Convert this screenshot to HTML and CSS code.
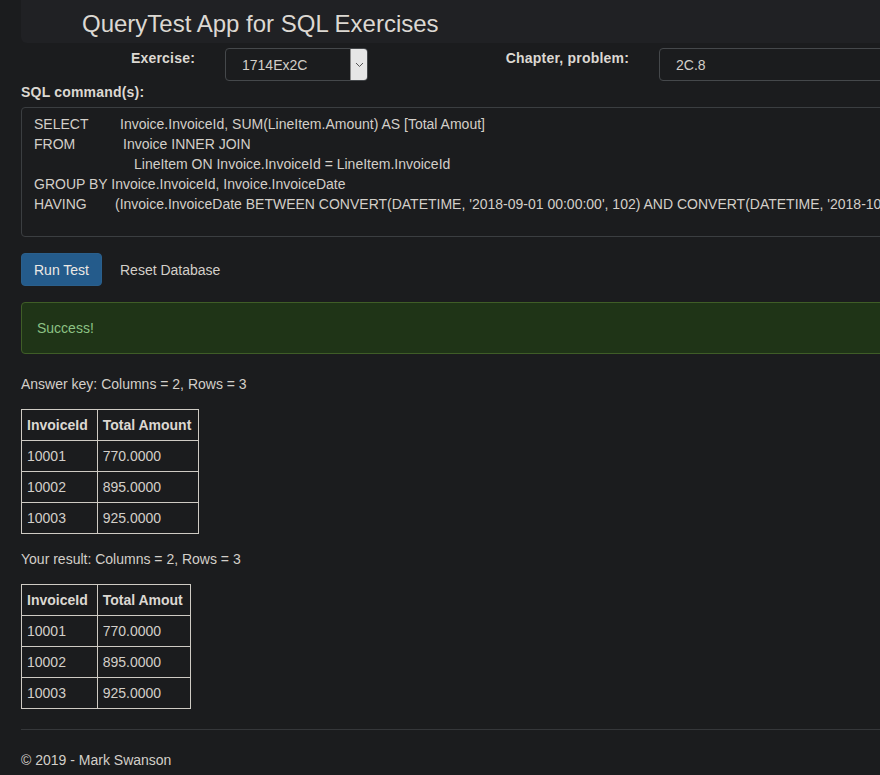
FILE: index.html
```html
<!DOCTYPE html>
<html lang="en">
<head>
<meta charset="utf-8">
<title>QueryTest App for SQL Exercises</title>
<link rel="stylesheet" href="styles.css">
</head>
<body>
<div class="page">
  <div class="jumbotron">
    <h1>QueryTest App for SQL Exercises</h1>
  </div>

  <div class="form-row">
    <label class="lbl lbl-exercise">Exercise:</label>
    <div class="select">
      <span class="select-value">1714Ex2C</span>
      <span class="select-arrow">
        <svg width="9" height="6" viewBox="0 0 9 6"><path d="M1 1 L4.5 4.5 L8 1" fill="none" stroke="#555" stroke-width="1"/></svg>
      </span>
    </div>
    <label class="lbl lbl-chapter">Chapter, problem:</label>
    <div class="input">2C.8</div>
  </div>

  <label class="lbl lbl-sql">SQL command(s):</label>
  <div class="textarea"><div class="line"><span class="kw kw-select">SELECT</span>Invoice.InvoiceId, SUM(LineItem.Amount) AS [Total Amout]</div><div class="line"><span class="kw kw-from">FROM</span>Invoice INNER JOIN</div><div class="line"><span class="kw kw-indent"></span>LineItem ON Invoice.InvoiceId = LineItem.InvoiceId</div><div class="line">GROUP BY Invoice.InvoiceId, Invoice.InvoiceDate</div><div class="line"><span class="kw kw-having">HAVING</span>(Invoice.InvoiceDate BETWEEN CONVERT(DATETIME, '2018-09-01 00:00:00', 102) AND CONVERT(DATETIME, '2018-10-01 00:00:00', 102))</div></div>

  <div class="buttons">
    <button class="btn btn-primary" type="button">Run Test</button>
    <a class="btn btn-link" href="#">Reset Database</a>
  </div>

  <div class="alert">Success!</div>

  <p class="caption">Answer key: Columns = 2, Rows = 3</p>
  <table class="grid">
    <thead><tr><th>InvoiceId</th><th>Total Amount</th></tr></thead>
    <tbody>
      <tr><td>10001</td><td>770.0000</td></tr>
      <tr><td>10002</td><td>895.0000</td></tr>
      <tr><td>10003</td><td>925.0000</td></tr>
    </tbody>
  </table>

  <p class="caption">Your result: Columns = 2, Rows = 3</p>
  <table class="grid">
    <thead><tr><th>InvoiceId</th><th>Total Amout</th></tr></thead>
    <tbody>
      <tr><td>10001</td><td>770.0000</td></tr>
      <tr><td>10002</td><td>895.0000</td></tr>
      <tr><td>10003</td><td>925.0000</td></tr>
    </tbody>
  </table>

  <hr class="rule">
  <footer class="footer">© 2019 - Mark Swanson</footer>
</div>
</body>
</html>
```

FILE: styles.css
```css
html, body {
  margin: 0;
  padding: 0;
  overflow: hidden;
  background: #1b1c1e;
}
body {
  font-family: "Liberation Sans", Arial, sans-serif;
  font-size: 14px;
  line-height: 20px;
  color: #d3cfc9;
}
.page {
  width: 1150px;
  padding-left: 21px;
}
.jumbotron {
  height: 43px;
  box-sizing: border-box;
  background: #202124;
  border-radius: 0 0 6px 6px;
  padding: 10px 0 0 61px;
}
.jumbotron h1 {
  margin: 0;
  font-size: 24px;
  line-height: 28px;
  font-weight: normal;
  color: #dcd8d2;
}
.form-row {
  display: flex;
  align-items: flex-start;
  margin-top: 5px;
}
.lbl {
  display: block;
  font-weight: bold;
  color: #dcd8d2;
  letter-spacing: 0.2px;
}
.lbl-exercise {
  width: 174px;
  text-align: right;
}
.select {
  margin-left: 30px;
  width: 143px;
  height: 33px;
  box-sizing: border-box;
  border: 1px solid #45484b;
  border-radius: 4px;
  display: flex;
  align-items: stretch;
  overflow: hidden;
}
.select-value {
  flex: 1;
  padding: 6px 0 0 16px;
}
.select-arrow {
  width: 16px;
  background: #e6e6e6;
  border-left: 1px solid #8a8a8a;
  display: flex;
  align-items: center;
  justify-content: center;
}
.lbl-chapter {
  width: 261px;
  text-align: right;
}
.input {
  margin-left: 30px;
  width: 400px;
  height: 33px;
  box-sizing: border-box;
  border: 1px solid #45484b;
  border-radius: 4px;
  padding: 6px 0 0 16px;
}
.lbl-sql {
  margin-top: 1px;
  margin-bottom: 5px;
}
.textarea {
  box-sizing: border-box;
  height: 130px;
  border: 1px solid #3b3e41;
  border-radius: 4px;
  padding: 6px 12px;
  white-space: pre;
  overflow: hidden;
}
.kw {
  display: inline-block;
}
.kw-select { width: 86px; }
.kw-from { width: 89px; }
.kw-indent { width: 100px; }
.kw-having { width: 81px; }
.buttons {
  margin-top: 16px;
  display: flex;
  align-items: center;
}
.btn {
  font-family: inherit;
  font-size: 14px;
  line-height: 20px;
  padding: 6px 12px;
  border-radius: 4px;
  border: 1px solid transparent;
  text-decoration: none;
  box-sizing: border-box;
  height: 33px;
}
.btn-primary {
  background: #245b8b;
  border-color: #2a5f8c;
  color: #ece9e5;
  width: 81px;
}
.btn-link {
  margin-left: 4px;
  padding: 6px 13px;
  color: #d3cfc9;
}
.alert {
  margin: 16px 0 20px;
  height: 52px;
  box-sizing: border-box;
  padding: 15px 15px;
  background: #1f3417;
  border: 1px solid #3f5d27;
  border-radius: 4px;
  color: #8cc284;
}
.caption {
  margin: 0 0 15px;
}
.grid {
  border-collapse: collapse;
  margin-bottom: 15px;
}
.grid th, .grid td {
  border: 1px solid #cfcbc4;
  padding: 5px 7px 5px 5px;
  line-height: 20px;
  text-align: left;
}
.grid th:first-child, .grid td:first-child {
  padding-right: 9px;
}
.grid th {
  font-weight: bold;
  color: #dcd8d2;
}
.rule {
  margin: 20px 0 20px;
  border: 0;
  border-top: 1px solid #35373a;
  height: 0;
}
.footer {
  line-height: 20px;
}
```
